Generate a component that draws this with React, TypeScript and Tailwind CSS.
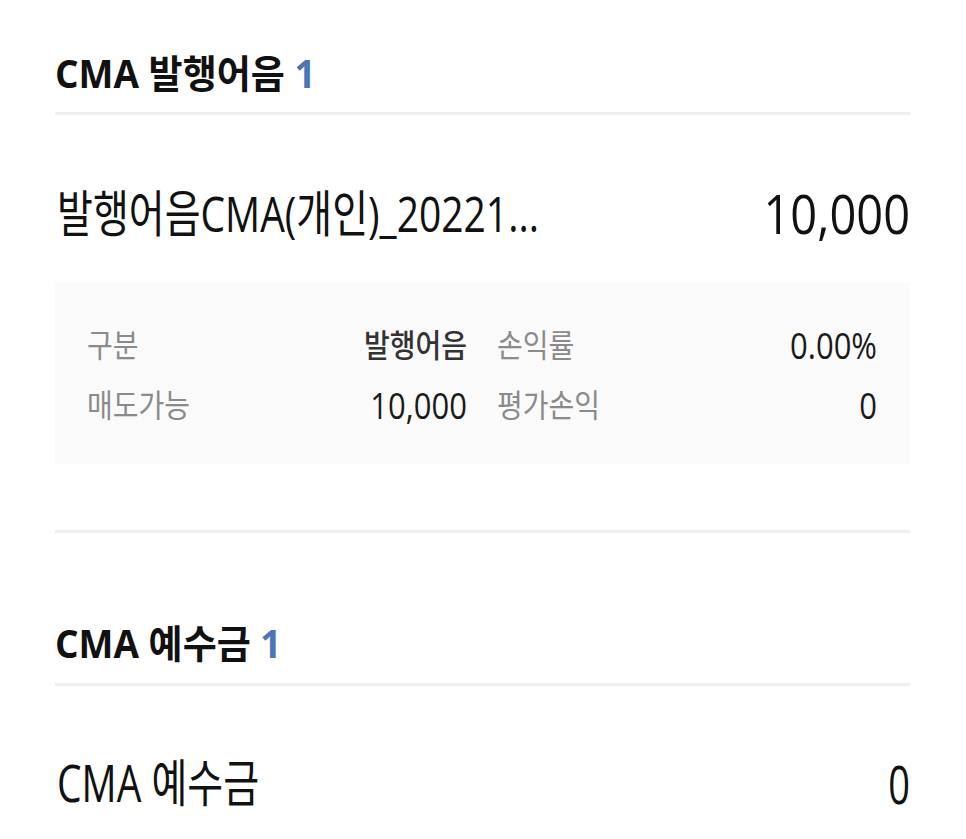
const font = { fontFamily: '"Open Sans", "Noto Sans CJK KR", sans-serif' }

function Divider({ className = '' }: { className?: string }) {
  return <div className={`h-[3px] bg-[#efefef] ${className}`} />
}

function SectionTitle({ title, count }: { title: string; count: number }) {
  return (
    <h2 className="text-[37px] leading-[40px] font-bold text-[#111]">
      <span className="inline-block scale-y-[1.06]">
        {title} <span className="text-[#4c75b6]">{count}</span>
      </span>
    </h2>
  )
}

function Cell({ label, value, strong }: { label: string; value: string; strong?: boolean }) {
  return (
    <div className="flex items-center justify-between">
      <span className="inline-block text-[28px] text-[#8a8a8a] scale-y-[1.12]">{label}</span>
      {strong ? (
        <span className="inline-block text-[28px] text-[#333] font-medium scale-y-[1.12]">{value}</span>
      ) : (
        <span className="inline-block text-[31px] text-[#1a1a1a] scale-y-[1.15]">{value}</span>
      )}
    </div>
  )
}

export default function App() {
  return (
    <div className="min-h-[839px] bg-white pl-[55px] pr-[56px]" style={font}>
      {/* CMA 발행어음 */}
      <div className="pt-[53px]">
        <SectionTitle title="CMA 발행어음" count={1} />
      </div>
      <Divider className="mt-[19px]" />

      <div className="mt-[74px] flex items-center justify-between h-[48px] text-[#111]">
        <span className="inline-block text-[39px] leading-[48px] pl-[2px] scale-y-[1.28]">발행어음CMA(개인)_20221...</span>
        <span className="inline-block text-[47px] leading-[48px] scale-y-[1.15]">10,000</span>
      </div>

      <div className="mt-[46px] bg-[#fafafa] pl-[32px] pr-[33px] pt-[42px] pb-[39px] leading-[40px]">
        <div className="grid grid-cols-2 gap-x-[30px] gap-y-[20px]">
          <Cell label="구분" value="발행어음" strong />
          <Cell label="손익률" value="0.00%" />
          <Cell label="매도가능" value="10,000" />
          <Cell label="평가손익" value="0" />
        </div>
      </div>

      <Divider className="mt-[66px]" />

      {/* CMA 예수금 */}
      <div className="mt-[90px]">
        <SectionTitle title="CMA 예수금" count={1} />
      </div>
      <Divider className="mt-[20px]" />

      <div className="mt-[73px] flex items-center justify-between h-[48px] text-[#111]">
        <span className="inline-block text-[39px] leading-[48px] pl-[2px] scale-y-[1.3]">CMA 예수금</span>
        <span className="inline-block text-[38px] leading-[48px] scale-y-[1.4]">0</span>
      </div>
    </div>
  )
}
